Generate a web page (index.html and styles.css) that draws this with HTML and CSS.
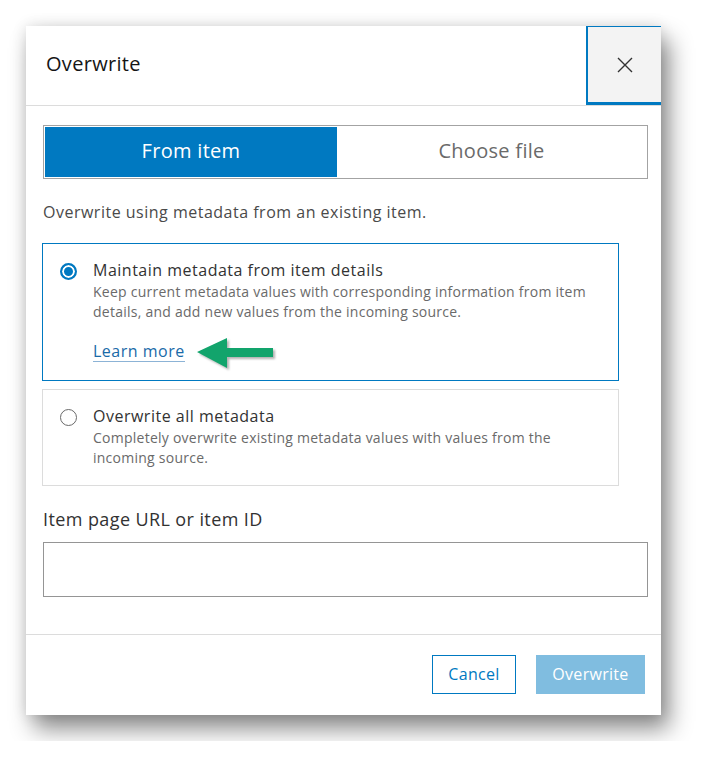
FILE: index.html
```html
<!DOCTYPE html>
<html lang="en">
<head>
<meta charset="utf-8">
<title>Overwrite</title>
<link rel="stylesheet" href="styles.css">
</head>
<body>
<div class="page">
  <div class="dialog">
    <div class="header">
      <div class="title">Overwrite</div>
      <div class="close">
        <svg width="16" height="16" viewBox="0 0 16 16"><path d="M1 1 L15 15 M15 1 L1 15" stroke="#323232" stroke-width="1.4" fill="none"/></svg>
      </div>
    </div>
    <div class="content">
      <div class="segmented">
        <div class="seg seg-active">From item</div>
        <div class="seg">Choose file</div>
      </div>
      <p class="intro">Overwrite using metadata from an existing item.</p>
      <div class="card card-selected">
        <span class="radio radio-on"></span>
        <div class="card-body">
          <div class="card-title">Maintain metadata from item details</div>
          <div class="card-desc">Keep current metadata values with corresponding information from item details, and add new values from the incoming source.</div>
          <div class="learn-row">
            <span class="learn">Learn more</span>
            <svg class="arrow" width="82" height="36" viewBox="0 0 82 36"><path d="M2 17 L32 3 L32 13 L78 13 L78 22 L32 22 L32 33 Z" fill="#12a46c"/></svg>
          </div>
        </div>
      </div>
      <div class="card">
        <span class="radio"></span>
        <div class="card-body">
          <div class="card-title">Overwrite all metadata</div>
          <div class="card-desc">Completely overwrite existing metadata values with values from the incoming source.</div>
        </div>
      </div>
      <div class="field-label">Item page URL or item ID</div>
      <div class="input"></div>
    </div>
    <div class="footer">
      <div class="btn btn-outline">Cancel</div>
      <div class="btn btn-solid">Overwrite</div>
    </div>
  </div>
</div>
</body>
</html>
```

FILE: styles.css
```css
html, body {
  margin: 0;
  background: #ffffff;
  font-family: "Open Sans", "Noto Sans", sans-serif;
  color: #323232;
}

.page {
  padding: 26px;
}

.dialog {
  width: 635px;
  height: 689px;
  background: #ffffff;
  display: flex;
  flex-direction: column;
  box-shadow: 8px 14px 22px rgba(0, 0, 0, 0.45), 0 0 14px rgba(0, 0, 0, 0.12);
}

.header {
  display: flex;
  height: 79px;
  border-bottom: 1px solid #dcdcdc;
}

.title {
  flex: 1;
  display: flex;
  align-items: center;
  padding-left: 20px;
  padding-bottom: 4px;
  font-size: 20px;
  letter-spacing: 0.3px;
  color: #151515;
}

.close {
  width: 75px;
  box-sizing: border-box;
  background: #f3f3f3;
  border-left: 2px solid #0079c1;
  border-top: 1px solid #0079c1;
  border-bottom: 3px solid #0079c1;
  display: flex;
  align-items: center;
  justify-content: center;
}

.content {
  padding: 19px 13px 0 17px;
  display: flex;
  flex-direction: column;
}

.segmented {
  display: flex;
  height: 54px;
  box-sizing: border-box;
  border: 1px solid #a3a3a3;
  padding: 1px;
}

.seg {
  flex: 1;
  display: flex;
  align-items: center;
  justify-content: center;
  padding-bottom: 3px;
  font-size: 20px;
  letter-spacing: 0.3px;
  color: #6a6a6a;
}

.seg-active {
  flex: 0 0 292px;
  background: #0079c1;
  color: #ffffff;
}

.intro {
  margin: 23px 0 0;
  font-size: 16px;
  line-height: 20px;
  letter-spacing: 0.5px;
  color: #4a4a4a;
}

.card {
  width: 577px;
  box-sizing: border-box;
  margin-left: -1px;
  border: 1px solid #dcdcdc;
  display: flex;
  align-items: flex-start;
  padding: 16px 16px 17px 17px;
  margin-top: 8px;
}

.card-selected {
  border-color: #0079c1;
  margin-top: 21px;
  padding-bottom: 19px;
}

.radio {
  flex: 0 0 auto;
  width: 17px;
  height: 17px;
  box-sizing: border-box;
  border: 1px solid #6a6a6a;
  border-radius: 50%;
  margin-top: 3px;
  margin-right: 16px;
  background: #ffffff;
}

.radio-on {
  border: 2px solid #0079c1;
  box-shadow: inset 0 0 0 2px #ffffff;
  background: #0079c1;
}

.card-body {
  flex: 1;
}

.card-title {
  font-size: 16px;
  line-height: 20px;
  letter-spacing: 0.5px;
  color: #323232;
}

.card-desc {
  margin-top: 2px;
  font-size: 14px;
  line-height: 20px;
  letter-spacing: 0.25px;
  color: #6a6a6a;
}

.learn-row {
  display: flex;
  align-items: center;
  margin-top: 19px;
  height: 20px;
}

.learn {
  font-size: 16px;
  line-height: 20px;
  letter-spacing: 0.5px;
  color: #1a6aa8;
  border-bottom: 1px solid #8cb3d6;
}

.arrow {
  margin-left: 10px;
  margin-top: 4px;
  filter: drop-shadow(2px 2px 1px rgba(0, 0, 0, 0.3));
}

.field-label {
  margin-top: 21px;
  font-size: 18px;
  line-height: 24px;
  letter-spacing: 0.4px;
  color: #323232;
}

.input {
  margin-top: 11px;
  height: 55px;
  box-sizing: border-box;
  border: 1px solid #959595;
}

.footer {
  margin-top: auto;
  height: 81px;
  box-sizing: border-box;
  border-top: 1px solid #dcdcdc;
  display: flex;
  justify-content: flex-end;
  align-items: flex-start;
  gap: 20px;
  padding: 20px 16px 0 0;
}

.btn {
  height: 39px;
  box-sizing: border-box;
  display: flex;
  align-items: center;
  justify-content: center;
  padding-bottom: 2px;
  font-size: 16px;
  letter-spacing: 0.3px;
}

.btn-outline {
  width: 84px;
  border: 1px solid #0079c1;
  color: #0079c1;
  background: #ffffff;
}

.btn-solid {
  width: 109px;
  background: #80bde0;
  color: #ffffff;
}
```
